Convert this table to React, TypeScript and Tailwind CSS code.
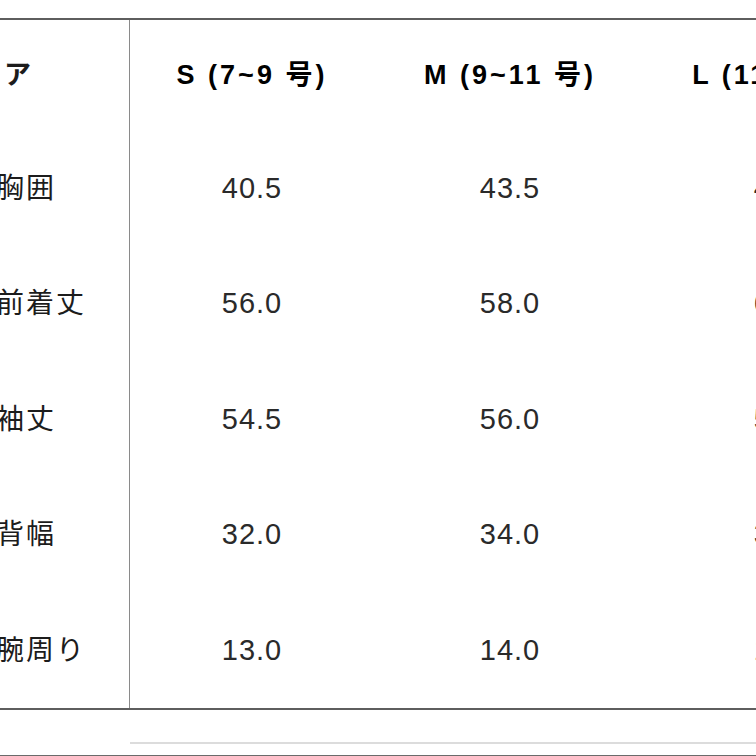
const sizes = ['S (7~9 号)', 'M (9~11 号)', 'L (11~13 号)']

const rows: { label: string; values: string[] }[] = [
  { label: '胸囲', values: ['40.5', '43.5', '46.5'] },
  { label: '前着丈', values: ['56.0', '58.0', '60.0'] },
  { label: '袖丈', values: ['54.5', '56.0', '57.5'] },
  { label: '背幅', values: ['32.0', '34.0', '36.0'] },
  { label: '腕周り', values: ['13.0', '14.0', '15.0'] },
]

const heights = ['h-[115px]', 'h-[116px]', 'h-[115px]', 'h-[116px]', 'h-[115px]']

export default function App() {
  return (
    <div
      className="h-[756px] w-[756px] overflow-hidden bg-white pt-[18px] text-[#1c1c1c]"
      style={{ fontFamily: '"Liberation Sans", "Noto Sans CJK JP", sans-serif' }}
    >
      <div className="w-[922px] border-t-2 border-b-2 border-[#5e5e5e]">
        <div className="grid h-[111px] grid-cols-[130px_244px_272px_276px] items-center">
          <div className="flex h-full items-center border-r-[1.5px] border-[#8a8a8a] pl-[4px] text-[27px] font-bold">
            ア
          </div>
          {sizes.map((s) => (
            <div key={s} className="whitespace-nowrap text-center text-[27px] font-bold tracking-[3px] text-black">
              {s}
            </div>
          ))}
        </div>
        {rows.map((r, i) => (
          <div key={r.label} className={`grid grid-cols-[130px_244px_272px_276px] items-center ${heights[i]}`}>
            <div className="-ml-[4px] flex h-full items-center border-r-[1.5px] border-[#8a8a8a] text-[28px] tracking-[2px]">
              {r.label}
            </div>
            {r.values.map((v, j) => (
              <div key={j} className="text-center text-[29px] tracking-[1px] text-[#2a2a2a]">
                {v}
              </div>
            ))}
          </div>
        ))}
      </div>
      <div className="mt-[32px] pl-[130px]">
        <div className="h-[2px] bg-[#dcdcdc]" />
      </div>
      <div className="mt-[11px] h-[2px] bg-[#6a6a6a]" />
    </div>
  )
}
